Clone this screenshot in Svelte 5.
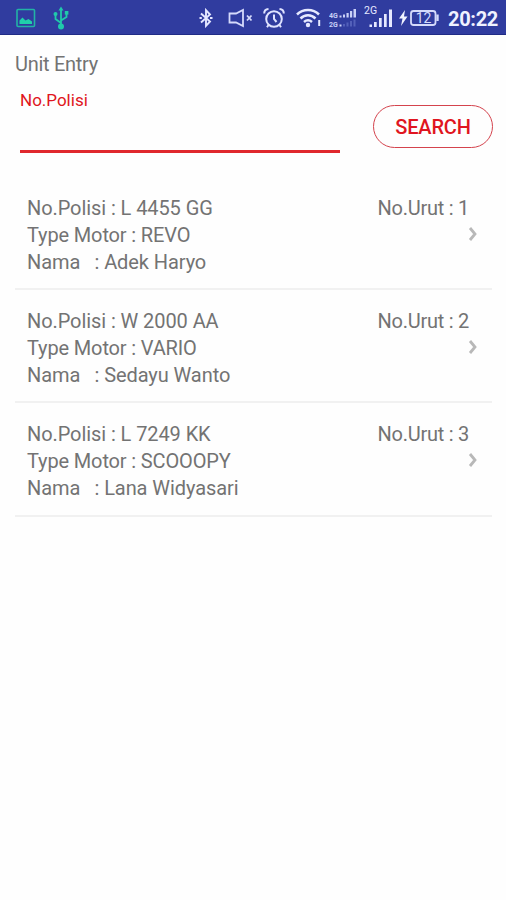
<script>
  let query = $state('');

  const units = [
    { plate: 'L 4455 GG', type: 'REVO', name: 'Adek Haryo', order: 1 },
    { plate: 'W 2000 AA', type: 'VARIO', name: 'Sedayu Wanto', order: 2 },
    { plate: 'L 7249 KK', type: 'SCOOOPY', name: 'Lana Widyasari', order: 3 },
  ];
</script>

<!-- Status bar -->
<header class="status">
  <div class="status__left">
    <svg width="20" height="20" viewBox="0 0 20 20" fill="none" stroke="#22b3a5" stroke-width="1.6">
      <rect x="1" y="1.5" width="17.5" height="17" rx="1" />
      <path d="M3.5 16v-3.5l3-3 3 3 3-1.5 3.5 2.5V16z" fill="#20cfaa" stroke="none" />
    </svg>
    <svg width="16" height="24" viewBox="0 0 16 24" fill="none" stroke="#20c9ab" stroke-width="1.8">
      <path d="M8 4v16M8 17L2.5 13V9M8 14.5l5.5-3.5V7" />
      <path d="M8 0.5l2.5 4h-5z" fill="#20c9ab" stroke="none" />
      <circle cx="8" cy="20.5" r="3" fill="#20c9ab" stroke="none" />
      <circle cx="2.5" cy="8" r="2" fill="#20c9ab" stroke="none" />
      <path d="M11.8 5h3.6v3.6h-3.6z" fill="#20c9ab" stroke="none" />
    </svg>
  </div>
  <div class="status__right">
    <svg class="bluetooth" width="14" height="20" viewBox="0 0 14 20" fill="none" stroke="#e3e6ff" stroke-width="1.9">
      <path d="M2 5.5l9 8-4 4.300V2.200l4 4.300-9 8" />
      <path d="M0.5 10h2.300M11 10h2.500" />
    </svg>
    <svg class="mute" width="25" height="20" viewBox="0 0 25 20" fill="none" stroke="#d5dafb" stroke-width="1.8">
      <path d="M1.5 5.5h6.500L15 2v16l-7-3.500H1.500z" />
      <path d="M19 7.5l4.500 5M23.500 7.500l-4.500 5" />
    </svg>
    <svg class="alarm" width="22" height="22" viewBox="0 0 22 22" fill="none" stroke="#dfe3ff" stroke-width="2">
      <circle cx="11" cy="12" r="7.8" />
      <path d="M11 7.5V12l2.500 3M1.200 6.500c0-2.500 1.800-4.300 4.300-4.500M20.800 6.500c0-2.500-1.800-4.300-4.300-4.500M5.500 18l-1.500 2.200M16.500 18l1.500 2.200" />
    </svg>
    <svg class="wifi" width="26" height="20" viewBox="0 0 26 20" fill="none" stroke="#e6e9ff" stroke-width="2.5">
      <path d="M1 6.500c6-6 16-6 22 0M4.500 10.500c4.200-4.200 10.800-4.200 15 0M8 14c2.500-2.200 5.500-2.200 8 0" />
      <circle cx="12" cy="17" r="2.2" fill="#e6e9ff" stroke="none" />
      <path d="M23.200 12v6" stroke-width="2" />
    </svg>
    <svg class="dual" width="28" height="20" viewBox="0 0 28 20" fill="#c9d0f7">
      <text x="0" y="9.5">4G</text>
      <text x="0" y="18.5">2G</text>
      <path d="M10.500 7.500h2v2h-2zM14 6.500h2v3h-2zM17.500 5h2.200v4.500h-2.200zM21 3h2.200v6.500H21zM24.500 1H27v8.500h-2.500z" />
      <path d="M10.500 16.500h2v2h-2z" />
      <path d="M14 16h2v2.500h-2zM17.500 14.500h2v4h-2zM21 13h2v5.500h-2zM24.500 11.500h2v7h-2z" fill="#5360ba" />
    </svg>
    <svg class="signal" width="29" height="26" viewBox="0 0 29 26" fill="#e6e9ff">
      <text x="0" y="9.5">2G</text>
      <path d="M5.500 20.500H8V23H5.500zM10 18h2.700v5H10zM15 14h2.700v9H15zM20 10h2.700v13H20zM25 5.500h3V23h-3z" />
    </svg>
    <svg class="battery" width="41" height="18" viewBox="0 0 41 18" fill="none" stroke="#d5dafb" stroke-width="1.8">
      <path d="M6 1L0 9.500h3.500L2 17l6.500-9.500H5z" fill="#f0f2ff" stroke="none" />
      <rect x="12" y="2" width="24.5" height="14" rx="2.5" />
      <path d="M38.500 5.500V12" stroke-width="2.4" />
      <text x="24.5" y="14" text-anchor="middle">12</text>
    </svg>
    <span class="time">20:22</span>
  </div>
</header>

<main class="page">
  <h1 class="title">Unit Entry</h1>

  <form class="search" onsubmit={(e) => e.preventDefault()}>
    <label class="field">
      <span class="field__label">No.Polisi</span>
      <input class="field__input" type="text" bind:value={query} />
    </label>
    <button class="search__btn" type="submit">SEARCH</button>
  </form>

  <div class="list">
    {#each units as unit (unit.order)}
      <div class="unit">
        <div class="unit__info">
          <div>No.Polisi : {unit.plate}</div>
          <div class="unit__type">Type Motor : {unit.type}</div>
          <div><span class="unit__name">Nama</span>: {unit.name}</div>
        </div>
        <div class="unit__side">
          <div class="unit__order">No.Urut : {unit.order}</div>
          <svg class="unit__arrow" width="10" height="16" viewBox="0 0 10 16" fill="none" stroke="#b8b8b8" stroke-width="2.8">
            <path d="M2 2l5 6-5 6" />
          </svg>
        </div>
      </div>
    {/each}
  </div>
</main>

<style>
:global(body) {
  margin: 0;
  background: #fefefe;
}

.status,
.page {
  font-family: Roboto, "Liberation Sans", sans-serif;
}

.status {
  box-sizing: border-box;
  height: 35px;
  padding: 0 9px 0 16px;
  display: flex;
  justify-content: space-between;
  background: #303c9f;
  border-bottom: 1px solid #202b85;
}

.status__left,
.status__right {
  display: flex;
  align-items: center;
  padding-top: 2px;
}

.status__left {
  gap: 17px;
}

.status svg {
  flex: none;
}

.status text {
  stroke: none;
}

.mute {
  margin-left: 15px;
}

.alarm {
  margin-left: 10px;
}

.wifi {
  margin-left: 11px;
}

.dual {
  margin-left: 7px;
}

.dual text {
  font-size: 7px;
  font-weight: 700;
}

.signal {
  margin: 0 0 2px 7px;
}

.signal text {
  font-size: 10.5px;
}

.battery {
  margin-left: 6px;
}

.battery text {
  font-size: 14px;
  fill: #d5dafb;
}

.time {
  margin: 1px 0 0 8px;
  width: 49px;
  font-size: 20px;
  font-weight: 700;
  letter-spacing: -0.3px;
  line-height: 24px;
  color: #f0f2ff;
}

.page {
  padding: 16px 14px 0 15px;
  color: #737373;
}

.title {
  margin: 0;
  font-size: 20px;
  font-weight: 400;
  letter-spacing: -0.28px;
  line-height: 26px;
}

.search {
  display: flex;
  align-items: flex-start;
  justify-content: space-between;
  margin-right: -1px;
  padding: 13px 0 0 5px;
}

.field {
  width: 320px;
}

.field__label {
  display: block;
  font-size: 17px;
  line-height: 20px;
  color: #e01520;
}

.field__input {
  display: block;
  box-sizing: border-box;
  width: 100%;
  height: 43px;
  padding: 0;
  border: 0;
  border-bottom: 3px solid #e0282d;
  outline: none;
  background: none;
  font: 20px Roboto, sans-serif;
}

.search__btn {
  width: 120px;
  height: 43px;
  margin-top: 15px;
  padding: 0;
  border: 1.5px solid #d4434d;
  border-radius: 22px;
  background: none;
  font: 500 20px Roboto, "Liberation Sans", sans-serif;
  letter-spacing: -0.15px;
  color: #e01520;
}

.list {
  margin-top: 24px;
}

.unit {
  box-sizing: border-box;
  height: 113.2px;
  padding: 18px 23px 0 12px;
  display: flex;
  justify-content: space-between;
  border-bottom: 2px solid #f1f1f1;
  font-size: 20px;
  letter-spacing: -0.08px;
  line-height: 26.8px;
}

.unit__type {
  letter-spacing: -0.14px;
}

.unit__name {
  display: inline-block;
  width: 67.5px;
}

.unit__side {
  display: flex;
  flex-direction: column;
  align-items: flex-end;
}

.unit__order {
  letter-spacing: -0.25px;
}

.unit__arrow {
  margin: 4px -9px 0 0;
}
</style>
